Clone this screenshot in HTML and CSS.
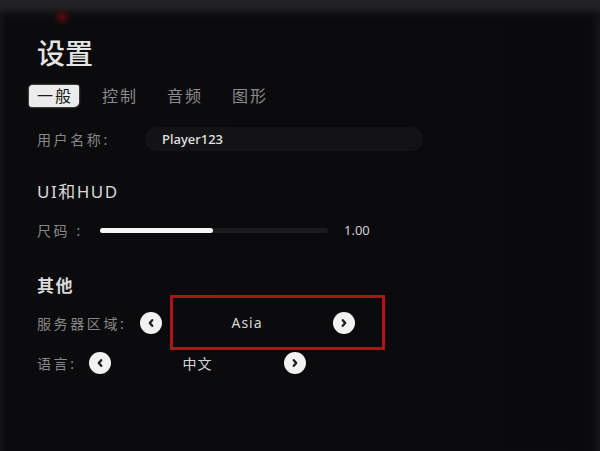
FILE: index.html
```html
<!DOCTYPE html>
<html lang="zh-CN">

<head>
  <meta charset="UTF-8">
  <meta name="viewport" content="width=device-width, initial-scale=1.0">
  <title>设置</title>
  <link rel="stylesheet" href="styles.css">
</head>

<body>
  <div class="screen">
    <div class="top-band"></div>

    <main class="panel">
      <h1 class="title">设置</h1>

      <nav class="tabs">
        <span class="tab active">一般</span>
        <span class="tab">控制</span>
        <span class="tab">音频</span>
        <span class="tab">图形</span>
      </nav>

      <div class="row name-row">
        <span class="label">用户名称:</span>
        <div class="name-input">Player123</div>
      </div>

      <h2 class="section">UI和HUD</h2>

      <div class="row size-row">
        <span class="label">尺码 :</span>
        <div class="slider">
          <div class="slider-fill" style="width: 113px"></div>
        </div>
        <span class="slider-value">1.00</span>
      </div>

      <h2 class="section other">其他</h2>

      <div class="row server-row">
        <span class="label">服务器区域:</span>
        <button class="arrow" aria-label="上一个">
          <svg viewBox="0 0 10 10"><path d="M6 2.7 L4 5 L6 7.3"/></svg>
        </button>
        <div class="focus-box">
          <span class="value server-value">Asia</span>
          <button class="arrow" aria-label="下一个">
            <svg viewBox="0 0 10 10"><path d="M4 2.7 L6 5 L4 7.3"/></svg>
          </button>
        </div>
      </div>

      <div class="row lang-row">
        <span class="label">语言:</span>
        <button class="arrow" aria-label="上一个">
          <svg viewBox="0 0 10 10"><path d="M6 2.7 L4 5 L6 7.3"/></svg>
        </button>
        <span class="value lang-value">中文</span>
        <button class="arrow" aria-label="下一个">
          <svg viewBox="0 0 10 10"><path d="M4 2.7 L6 5 L4 7.3"/></svg>
        </button>
      </div>
    </main>
  </div>
</body>

</html>
```

FILE: styles.css
```css
body {
  margin: 0;
  background: #0a0a0c;
  font-family: "Noto Sans", "Noto Sans CJK SC", sans-serif;
}

.screen {
  width: 600px;
  height: 451px;
  overflow: hidden;
  background:
    linear-gradient(to right, #141416 0, #0b0b0d 6px, #0a0a0c 590px, #151517 600px);
}

/* the torn grey strip along the top, with a red smudge */
.top-band {
  height: 28px;
  background:
    radial-gradient(ellipse 9px 9px at 62px 17px, rgba(110, 10, 20, 0.8) 0, rgba(70, 8, 14, 0.5) 60%, transparent 100%),
    linear-gradient(to bottom, #242427 0, #1f1f22 8px, rgba(20, 20, 22, 0.5) 14px, transparent 20px);
}

.panel {
  padding-left: 37px;
}

.title {
  margin: 10px 0 0;
  font-size: 28px;
  line-height: 30px;
  font-weight: 500;
  color: #e4e4e4;
}

.tabs {
  display: flex;
  gap: 29px;
  margin-top: 17px;
  height: 22px;
  align-items: center;
}

.tab {
  font-size: 16px;
  letter-spacing: 2px;
  color: #8a8a8a;
  line-height: 22px;
}

.tab.active {
  margin-left: -8px;
  padding: 0 6px 0 8px;
  margin-right: -6px;
  color: #1a1a1a;
  background: #ececec;
  border-radius: 4px 2px 5px 3px;
  box-shadow: 0 0 2px 0 rgba(235, 235, 235, 0.8);
}

.row {
  display: flex;
  align-items: center;
}

.label {
  font-size: 14px;
  letter-spacing: 2.6px;
  color: #878787;
}

.name-row {
  margin-top: 20px;
  height: 24px;
}

.name-row .label {
  width: 108px;
}

.name-input {
  width: 261px;
  height: 24px;
  padding-left: 17px;
  border-radius: 12px;
  background: #131315;
  font-size: 13px;
  line-height: 24px;
  font-weight: 500;
  color: #e2e2e2;
}

.section {
  margin: 31px 0 0;
  font-size: 17px;
  line-height: 20px;
  font-weight: 400;
  letter-spacing: 1.5px;
  color: #d9d9d9;
}

.size-row {
  margin-top: 18px;
  height: 20px;
}

.size-row .label {
  width: 63px;
}

.slider {
  width: 228px;
  height: 5px;
  border-radius: 3px;
  background: #1b1b1d;
}

.slider-fill {
  height: 5px;
  border-radius: 3px;
  background: #f4f4f4;
}

.slider-value {
  margin-left: 16px;
  font-size: 13px;
  color: #cfcfcf;
}

.section.other {
  margin-top: 37px;
  line-height: 18px;
  font-weight: 600;
}

.server-row .label {
  width: 103px;
}

.arrow {
  flex: none;
  width: 22px;
  height: 22px;
  padding: 0;
  border: none;
  border-radius: 50%;
  background: #f2f2f2;
  display: flex;
  align-items: center;
  justify-content: center;
}

.arrow svg {
  width: 12px;
  height: 12px;
  fill: none;
  stroke: #222;
  stroke-width: 2;
  stroke-linecap: round;
  stroke-linejoin: round;
}

/* red highlight frame around the server choice */
.focus-box {
  margin-left: 8px;
  width: 209px;
  height: 49px;
  border: 3px solid #b3121b;
  display: flex;
  align-items: center;
}

.value {
  font-size: 14px;
  color: #d6d6d6;
  text-align: center;
}

.server-value {
  width: 148px;
  letter-spacing: 1px;
}

.focus-box .arrow {
  margin-left: 12px;
}

.lang-row {
  margin-top: 1px;
  height: 24px;
}

.lang-row .label {
  width: 52px;
}

.lang-value {
  width: 173px;
  letter-spacing: 1px;
}
```
